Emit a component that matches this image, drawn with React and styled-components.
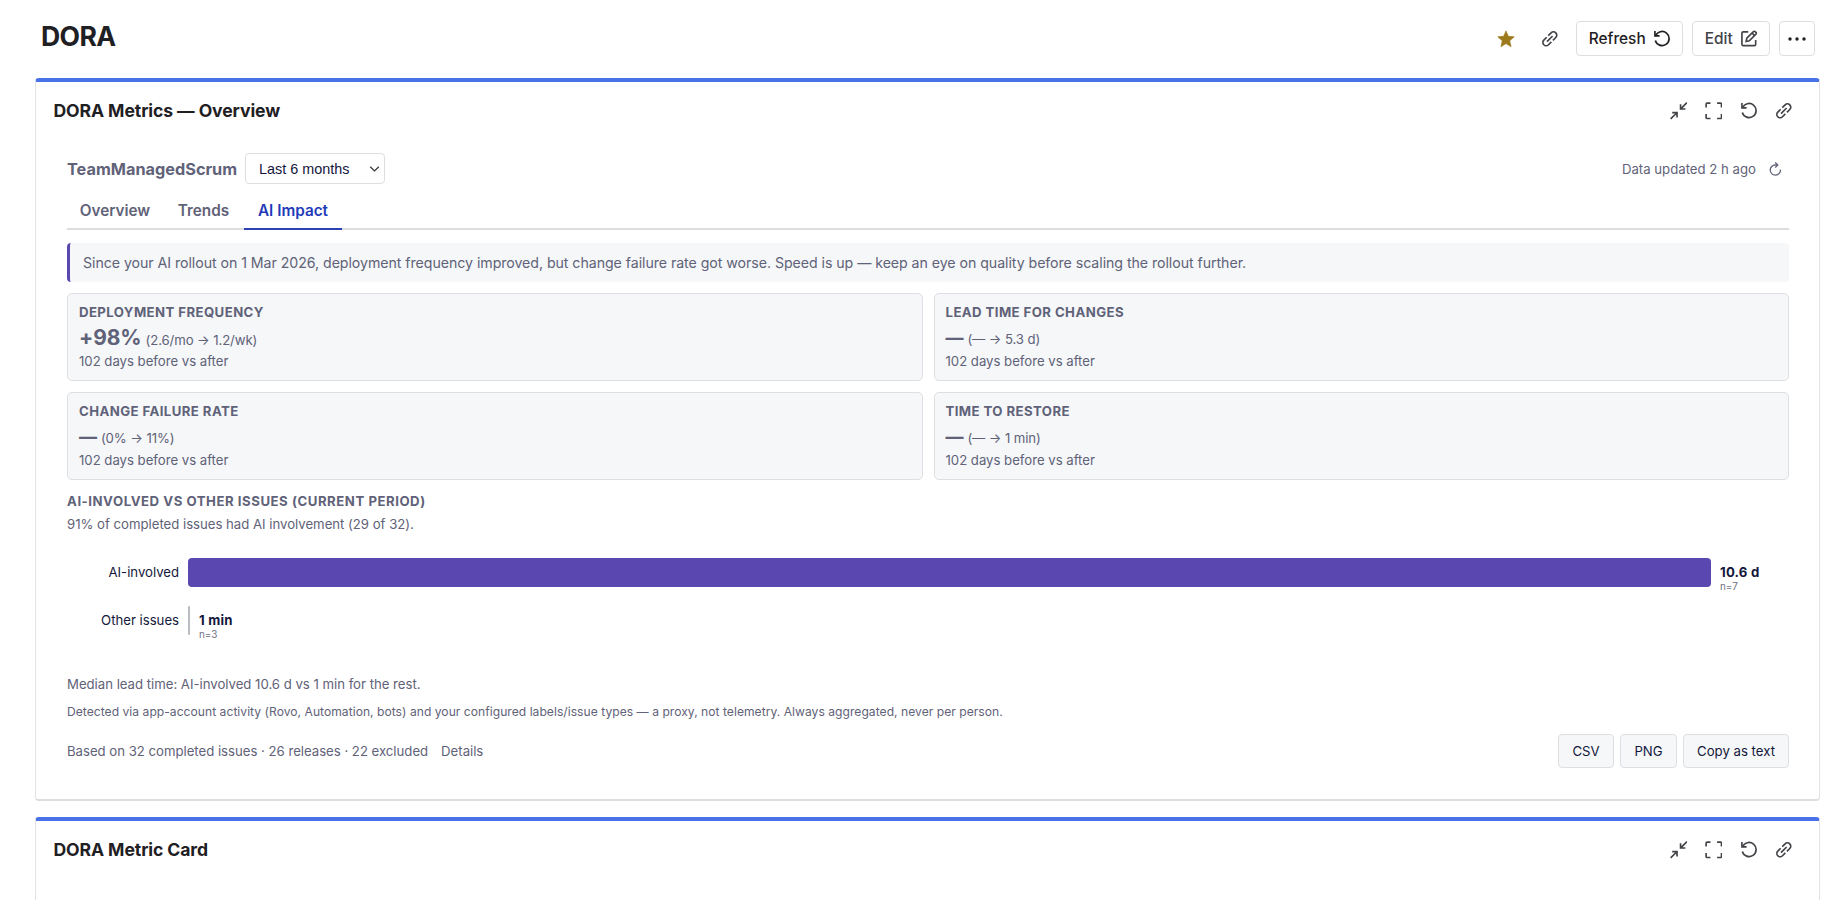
import styled, { createGlobalStyle } from 'styled-components';

const GlobalStyle = createGlobalStyle`
  * {
    box-sizing: border-box;
  }

  body {
    margin: 0;
    background: #ffffff;
    font-family: Inter, "Liberation Sans", sans-serif;
    color: #5f6278;
    overflow: hidden;
  }

  h1, h2, h3, p {
    margin: 0;
  }

  button {
    font-family: inherit;
    cursor: pointer;
  }
`;

const Page = styled.div`
  height: 900px;
  overflow: hidden;
  padding: 0 20px 0 35px;
`;

const TopBar = styled.header`
  display: flex;
  justify-content: space-between;
  align-items: flex-start;
  height: 78px;
  padding: 21px 5px 0 6px;
`;

const PageTitle = styled.h1`
  font-size: 26.6px;
  line-height: 30px;
  font-weight: 700;
  letter-spacing: -0.6px;
  color: #1f2023;
`;

const TopActions = styled.div`
  display: flex;
  align-items: center;
`;

const IconSlot = styled.button`
  display: flex;
  align-items: center;
  justify-content: center;
  width: ${(p) => p.$w || 35}px;
  height: 35px;
  padding: 0;
  border: 0;
  background: none;
  color: ${(p) => p.$color || '#424347'};
`;

const OutlineButton = styled.button`
  display: flex;
  align-items: center;
  justify-content: center;
  gap: 7px;
  width: ${(p) => p.$w}px;
  height: 35px;
  margin-left: 9px;
  padding: 0;
  border: 1px solid #dddee1;
  border-radius: 4px;
  background: #ffffff;
  font-size: 15.4px;
  font-weight: 500;
  color: ${(p) => p.$color || '#1f2023'};
`;

const Gadget = styled.section`
  height: ${(p) => p.$h}px;
  margin-bottom: 16px;
  border: 1px solid #e2e3e6;
  border-top: 4px solid #4972e8;
  border-bottom: 2px solid #dcdddf;
  border-radius: 4px;
  background: #ffffff;
`;

const GadgetHeader = styled.div`
  display: flex;
  justify-content: space-between;
  align-items: center;
  height: 58px;
  padding: 0 18px 0 17.5px;
`;

const GadgetTitle = styled.h2`
  font-size: 17.6px;
  line-height: 22px;
  font-weight: 700;
  letter-spacing: -0.1px;
  color: #1f2023;
`;

const GadgetTools = styled.div`
  display: flex;
`;

const Body = styled.div`
  padding: 13px 30px 0 31px;
`;

const Filters = styled.div`
  display: flex;
  align-items: center;
  height: 31px;
`;

const Project = styled.h3`
  width: 178px;
  font-size: 16.3px;
  line-height: 22px;
  font-weight: 700;
  white-space: nowrap;
`;

const Period = styled.div`
  display: flex;
  align-items: center;
  justify-content: space-between;
  width: 140px;
  height: 31px;
  padding: 0 4px 0 13px;
  border: 1px solid #dddee1;
  border-radius: 4px;
  font-family: "Liberation Sans", sans-serif;
  font-size: 14.4px;
  color: #14153d;
`;

const Updated = styled.div`
  display: flex;
  align-items: center;
  gap: 13px;
  margin-left: auto;
  padding-right: 7px;
  font-size: 13.2px;
  line-height: 18px;
`;

const Tabs = styled.nav`
  display: flex;
  height: 46px;
  border-bottom: 2px solid #dcdddf;
`;

const Tab = styled.button`
  width: ${(p) => p.$w}px;
  height: 46px;
  padding: 9px 0 0;
  border: 0;
  border-bottom: 2px solid ${(p) => (p.$active ? '#2b41b4' : 'transparent')};
  background: none;
  font-size: 15.3px;
  font-weight: 600;
  color: ${(p) => (p.$active ? '#1f3bb8' : '#5f6278')};
`;

const Insight = styled.p`
  height: 39px;
  margin: 13px 0 11px;
  padding-left: 13px;
  border-left: 3px solid #5a48b0;
  border-radius: 4px;
  background: #f5f7f9;
  font-size: 14.2px;
  line-height: 39px;
  letter-spacing: -0.06px;
`;

const MetricGrid = styled.div`
  display: grid;
  grid-template-columns: 1fr 1fr;
  gap: 11px;
`;

const MetricCard = styled.div`
  height: 88px;
  padding: 8px 11px;
  border: 1px solid #dddfe3;
  border-radius: 5px;
  background: #f5f7f9;
`;

const Label = styled.h3`
  font-size: 13.2px;
  line-height: 20px;
  font-weight: 700;
  letter-spacing: 0.42px;
  text-transform: uppercase;
`;

const SectionLabel = styled(Label)`
  margin-top: 12px;
  line-height: 18px;
  letter-spacing: 0.53px;
`;

const Change = styled.div`
  height: 30px;
  line-height: 32px;
  font-size: 13.2px;
  letter-spacing: -0.1px;
`;

const Delta = styled.strong`
  margin-right: 4px;
  font-size: ${(p) => (p.$flat ? 18 : 21)}px;
  font-weight: ${(p) => (p.$flat ? 800 : 700)};
`;

const Small = styled.p`
  height: ${(p) => p.$h || 18}px;
  line-height: ${(p) => p.$h || 18}px;
  font-size: ${(p) => p.$size || 13.2}px;
  letter-spacing: ${(p) => p.$ls || -0.02}px;
  white-space: nowrap;
`;

const Chart = styled.div`
  display: flex;
  flex-direction: column;
  gap: 19px;
  padding-top: 20px;
  height: 133px;
`;

const BarRow = styled.div`
  display: flex;
  align-items: center;
  height: 29px;
`;

const BarLabel = styled.span`
  width: 112px;
  margin-right: 9px;
  padding-bottom: 2px;
  font-size: 13.2px;
  text-align: right;
  letter-spacing: -0.02px;
  color: #14183c;
`;

const Bar = styled.div`
  height: 29px;
  border-radius: ${(p) => (p.$thin ? 1 : 4)}px;
  background: ${(p) => p.$color};
`;

const BarValue = styled.div`
  display: flex;
  flex-direction: column;
  margin: 10px 0 0 9px;
  font-size: 13.2px;
  line-height: 18px;
  font-weight: 700;
  letter-spacing: 0.2px;
  color: #14183c;

  small {
    font-size: 9.9px;
    line-height: 11px;
    font-weight: 400;
    letter-spacing: 0;
    color: #6d7083;
  }
`;

const Footer = styled.footer`
  display: flex;
  align-items: center;
  gap: 13px;
  height: 34px;
  margin-top: 9px;
`;

const Exports = styled.div`
  display: flex;
  gap: 6px;
  margin-left: auto;
`;

const ExportButton = styled.button`
  width: ${(p) => p.$w}px;
  height: 34px;
  padding: 0;
  border: 1px solid #dddfe3;
  border-radius: 4px;
  background: #f5f7f9;
  font-size: 13.2px;
  color: #14183c;
`;

const Svg = ({ children }) => (
  <svg width="17.6" height="17.6" viewBox="0 0 16 16" fill="none" stroke="currentColor" strokeWidth="1.5">
    {children}
  </svg>
);

const StarIcon = () => (
  <svg width="18" height="18" viewBox="0 0 16 16" fill="currentColor" stroke="currentColor" strokeWidth=".6" strokeLinejoin="round">
    <path d="M8 .8 10.1 5.6l5.2.5-4 3.5 1.2 5.2L8 12.1l-4.5 2.7 1.2-5.2-4-3.5 5.2-.5z" />
  </svg>
);

const LinkIcon = () => (
  <Svg>
    <g transform="rotate(-45 8 8)">
      <path d="M7 5H3.3a3 3 0 0 0 0 6H7" />
      <path d="M9 5h3.7a3 3 0 0 1 0 6H9" />
      <path d="M4.4 8h7.2" />
    </g>
  </Svg>
);

const RefreshIcon = () => (
  <Svg>
    <path d="M1.75 1v4.4H6" />
    <path d="M2.3 5.4a6.4 6.4 0 1 1-.2 4.1" />
  </Svg>
);

const EditIcon = () => (
  <Svg>
    <path d="M7.5 1.75H3A1.25 1.25 0 0 0 1.75 3v10c0 .7.55 1.25 1.25 1.25h10c.7 0 1.25-.55 1.25-1.25V9" />
    <path d="M5.6 10.4l.6-2.9 6-6a1.1 1.1 0 0 1 1.6 0l.7.7a1.1 1.1 0 0 1 0 1.6l-6 6z" />
    <path d="M11 2.8 13.2 5" />
  </Svg>
);

const CollapseIcon = () => (
  <Svg>
    <path d="M15.4.6 10 6M9.6 2v4.4H14" />
    <path d="M.6 15.4 6 10M2 9.6h4.4V14" />
  </Svg>
);

const ExpandIcon = () => (
  <Svg>
    <path d="M1 5V2q0-1 1-1h3M11 1h3q1 0 1 1v3M15 11v3q0 1-1 1h-3M5 15H2q-1 0-1-1v-3" />
  </Svg>
);

const MoreIcon = () => (
  <svg width="20" height="18" viewBox="0 0 20 18" fill="currentColor">
    <circle cx="3" cy="9" r="1.7" />
    <circle cx="10" cy="9" r="1.7" />
    <circle cx="17" cy="9" r="1.7" />
  </svg>
);

const ReloadIcon = () => (
  <svg width="13" height="14" viewBox="0 0 13 14" fill="none" stroke="currentColor" strokeWidth="1.3">
    <path d="M11.4 7.6A5.1 5.1 0 1 1 6.3 3h2.4" />
    <path d="M6.2.5 8.8 3 6.2 5.6" />
  </svg>
);

const ChevronIcon = () => (
  <svg width="11" height="8" viewBox="0 0 11 8" fill="none" stroke="#33343a" strokeWidth="1.2">
    <path d="M1.2 1.8 5.5 6l4.3-4.2" />
  </svg>
);

const metrics = [
  { label: 'Deployment frequency', change: '+98%', range: '(2.6/mo → 1.2/wk)' },
  { label: 'Lead time for changes', change: '—', range: '(— → 5.3 d)' },
  { label: 'Change failure rate', change: '—', range: '(0% → 11%)' },
  { label: 'Time to restore', change: '—', range: '(— → 1 min)' },
];

const bars = [
  { label: 'AI-involved', width: 1523, color: '#5a48b0', value: '10.6 d', n: 'n=7' },
  { label: 'Other issues', width: 2, color: '#b9bcc1', value: '1 min', n: 'n=3' },
];

const Header = ({ title }) => (
  <GadgetHeader>
    <GadgetTitle>{title}</GadgetTitle>
    <GadgetTools>
      <IconSlot><CollapseIcon /></IconSlot>
      <IconSlot><ExpandIcon /></IconSlot>
      <IconSlot><RefreshIcon /></IconSlot>
      <IconSlot><LinkIcon /></IconSlot>
    </GadgetTools>
  </GadgetHeader>
);

export default function App() {
  return (
    <Page>
      <GlobalStyle />
      <TopBar>
        <PageTitle>DORA</PageTitle>
        <TopActions>
          <IconSlot $w={53} $color="#9c7a1c"><StarIcon /></IconSlot>
          <IconSlot $w={35}><LinkIcon /></IconSlot>
          <OutlineButton $w={107}>Refresh <RefreshIcon /></OutlineButton>
          <OutlineButton $w={78} $color="#424347">Edit <EditIcon /></OutlineButton>
          <OutlineButton $w={36}><MoreIcon /></OutlineButton>
        </TopActions>
      </TopBar>

      <Gadget $h={723}>
        <Header title="DORA Metrics — Overview" />
        <Body>
          <Filters>
            <Project>TeamManagedScrum</Project>
            <Period>Last 6 months <ChevronIcon /></Period>
            <Updated>Data updated 2 h ago <ReloadIcon /></Updated>
          </Filters>
          <Tabs>
            <Tab $w={96}>Overview</Tab>
            <Tab $w={81}>Trends</Tab>
            <Tab $w={98} $active>AI Impact</Tab>
          </Tabs>
          <Insight>
            Since your AI rollout on 1 Mar 2026, deployment frequency improved, but change failure rate
            got worse. Speed is up — keep an eye on quality before scaling the rollout further.
          </Insight>
          <MetricGrid>
            {metrics.map((m) => (
              <MetricCard key={m.label}>
                <Label>{m.label}</Label>
                <Change>
                  <Delta $flat={m.change === '—'}>{m.change}</Delta>
                  {m.range}
                </Change>
                <Small>102 days before vs after</Small>
              </MetricCard>
            ))}
          </MetricGrid>
          <SectionLabel>AI-involved vs other issues (current period)</SectionLabel>
          <Small $h={28}>91% of completed issues had AI involvement (29 of 32).</Small>
          <Chart>
            {bars.map((b) => (
              <BarRow key={b.label}>
                <BarLabel>{b.label}</BarLabel>
                <Bar $color={b.color} $thin={b.width < 4} style={{ width: b.width }} />
                <BarValue>{b.value}<small>{b.n}</small></BarValue>
              </BarRow>
            ))}
          </Chart>
          <Small $h={27}>Median lead time: AI-involved 10.6 d vs 1 min for the rest.</Small>
          <Small $h={27} $size={12.1} $ls={0.03}>
            Detected via app-account activity (Rovo, Automation, bots) and your configured labels/issue types — a proxy, not telemetry. Always aggregated, never per person.
          </Small>
          <Footer>
            <Small>Based on 32 completed issues · 26 releases · 22 excluded</Small>
            <Small>Details</Small>
            <Exports>
              <ExportButton $w={56}>CSV</ExportButton>
              <ExportButton $w={57}>PNG</ExportButton>
              <ExportButton $w={106}>Copy as text</ExportButton>
            </Exports>
          </Footer>
        </Body>
      </Gadget>

      <Gadget $h={300}>
        <Header title="DORA Metric Card" />
      </Gadget>
    </Page>
  );
}
